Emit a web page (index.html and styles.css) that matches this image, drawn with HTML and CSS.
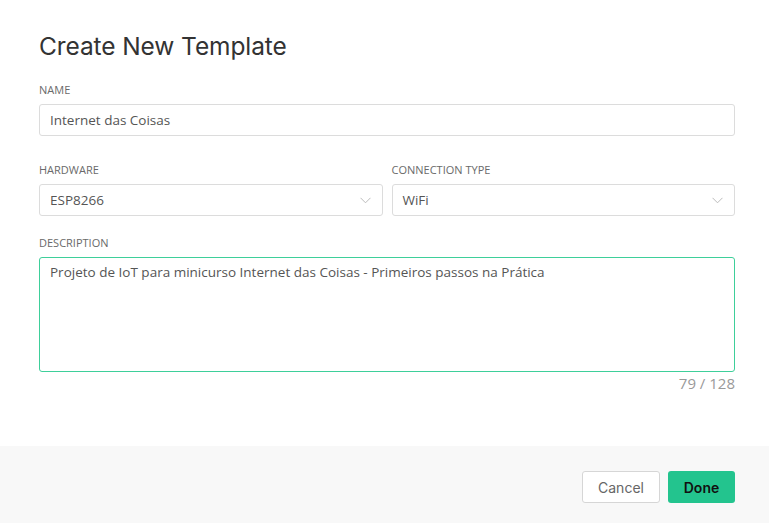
FILE: index.html
```html
<!DOCTYPE html>
<html>
<head>
<meta charset="utf-8">
<link rel="stylesheet" href="styles.css">
</head>
<body>
<div class="modal">
  <div class="content">
    <h1 class="title">Create New Template</h1>
    <div class="field">
      <div class="label">NAME</div>
      <div class="input">Internet das Coisas</div>
    </div>
    <div class="row">
      <div class="field">
        <div class="label">HARDWARE</div>
        <div class="input select">ESP8266
          <svg class="chev" width="11" height="7" viewBox="0 0 11 7"><path d="M0.5 0.8 L5.5 5.8 L10.5 0.8" fill="none" stroke="#bbb" stroke-width="1"/></svg>
        </div>
      </div>
      <div class="field">
        <div class="label">CONNECTION TYPE</div>
        <div class="input select">WiFi
          <svg class="chev" width="11" height="7" viewBox="0 0 11 7"><path d="M0.5 0.8 L5.5 5.8 L10.5 0.8" fill="none" stroke="#bbb" stroke-width="1"/></svg>
        </div>
      </div>
    </div>
    <div class="field desc">
      <div class="label">DESCRIPTION</div>
      <div class="textarea">Projeto de IoT para minicurso Internet das Coisas - Primeiros passos na Prática</div>
      <div class="counter">79 / 128</div>
    </div>
  </div>
  <div class="footer">
    <button class="btn cancel">Cancel</button>
    <button class="btn done">Done</button>
  </div>
</div>
</body>
</html>
```

FILE: styles.css
```css
html, body {
  margin: 0;
  padding: 0;
  background: #fff;
}
.modal {
  width: 769px;
  height: 523px;
  display: flex;
  flex-direction: column;
  font-family: "Open Sans", "Noto Sans", sans-serif;
  color: #555;
}
.content {
  flex: 1;
  padding: 31px 34px 0 39px;
}
.title {
  margin: 0 0 21px;
  font-family: "Inter", "Lato", sans-serif;
  font-weight: 400;
  font-size: 24.5px;
  line-height: 30px;
  color: #333;
  letter-spacing: -0.1px;
}
.field {
  display: flex;
  flex-direction: column;
}
.label {
  font-size: 11px;
  line-height: 15px;
  color: #6a6a6a;
  margin-bottom: 7px;
}
.input {
  height: 30px;
  border: 1px solid #dcdcdc;
  border-radius: 3px;
  padding: 0 10px;
  font-size: 13.5px;
  line-height: 30px;
  color: #555;
  display: flex;
  align-items: center;
  justify-content: space-between;
}
.row {
  display: grid;
  grid-template-columns: 1fr 1fr;
  gap: 9px;
  margin-top: 26px;
}
.chev {
  margin-right: 1px;
}
.desc {
  margin-top: 19px;
}
.textarea {
  height: 103px;
  border: 1px solid #3ecf9a;
  border-radius: 3px;
  padding: 5px 10px;
  font-size: 13.5px;
  line-height: 18px;
  color: #555;
}
.counter {
  text-align: right;
  font-size: 15px;
  line-height: 18px;
  margin-top: 2px;
  color: #999;
}
.footer {
  height: 77px;
  background: #f8f8f8;
  display: flex;
  justify-content: flex-end;
  align-items: flex-start;
  gap: 8px;
  padding: 25px 34px 0 0;
  box-sizing: border-box;
}
.btn {
  height: 32px;
  border-radius: 3px;
  font-family: "Inter", "Lato", sans-serif;
  font-size: 14px;
  padding: 0 14px;
  cursor: pointer;
}
.cancel {
  width: 78px;
  background: #fff;
  border: 1px solid #d6d6d6;
  color: #666;
}
.done {
  width: 67px;
  background: #23c48e;
  border: none;
  color: #111;
  font-weight: 600;
}
```
